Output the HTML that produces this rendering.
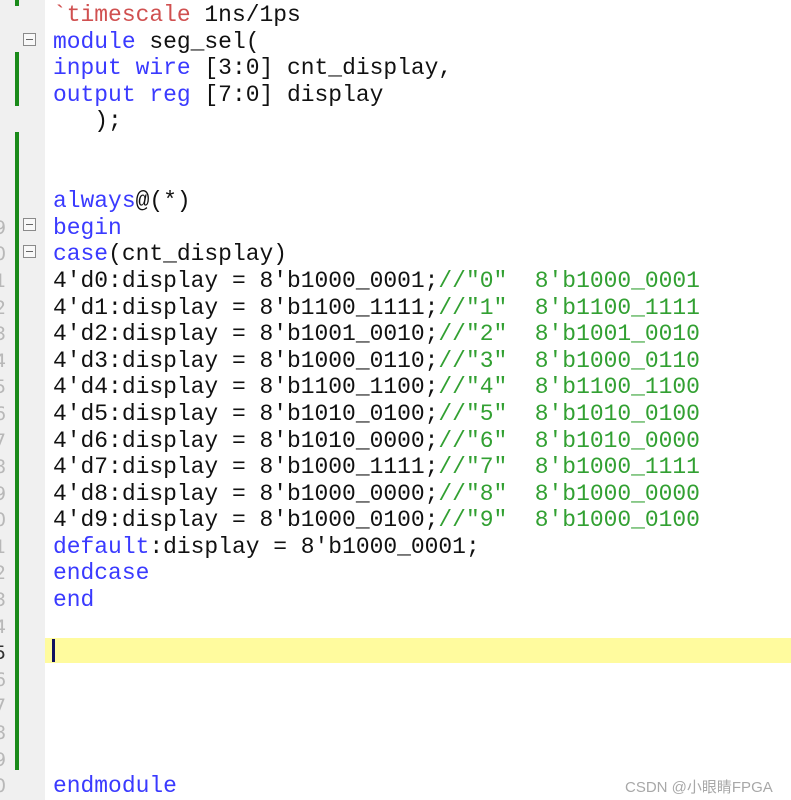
<!DOCTYPE html>
<html><head><meta charset="utf-8"><style>
html,body{margin:0;padding:0;background:#fff;width:791px;height:800px;overflow:hidden;position:relative}
.gut{position:absolute;left:0;top:0;width:45px;height:800px;background:#f0f0f0}
.bar{position:absolute;left:15px;width:4px;background:#1a8a1a}
.code{position:absolute;left:53px;top:2px;font-family:"Liberation Mono",monospace;font-size:22.95px;line-height:26.6px;white-space:pre;color:#111}
.ln{position:absolute;left:-6px;top:2px;font-family:"DejaVu Sans",sans-serif;font-size:19px;line-height:26.6px;color:#b8b8b8;white-space:pre}
.k{color:#3a3aff}.t{color:#d05050}.c{color:#32a032}
.fold{position:absolute;left:23px;width:11px;height:11px;border:1px solid #8a8a8a;background:#f8f8f8}
.fold:after{content:"";position:absolute;left:2px;right:2px;top:5px;height:1px;background:#666}
.hl{position:absolute;left:45px;right:0;top:638px;height:25px;background:#fffb9e}
.cur{position:absolute;left:52px;top:639px;width:3px;height:23px;background:#101060}
.wm{position:absolute;left:625px;top:776px;font-family:"Liberation Sans","Noto Sans CJK SC",sans-serif;font-size:15px;color:#a8a8a8}
</style></head><body>
<div class="gut"></div>
<div class="bar" style="top:0;height:6px"></div>
<div class="bar" style="top:52px;height:54px"></div>
<div class="bar" style="top:132px;height:638px"></div>
<div class="fold" style="top:33px"></div>
<div class="fold" style="top:218px"></div>
<div class="fold" style="top:245px"></div>
<div class="ln"> 
 
 
 
 
 
 
 
9
0
1
2
3
4
5
6
7
8
9
0
1
2
3
4
<span style="color:#333">5</span>
6
7
8
9
0</div>
<div class="hl"></div>
<div class="cur"></div>
<div class="code"><span class="t">`timescale</span> 1ns/1ps
<span class="k">module</span> seg_sel(
<span class="k">input</span> <span class="k">wire</span> [3:0] cnt_display,
<span class="k">output</span> <span class="k">reg</span> [7:0] display
   );


<span class="k">always</span>@(*)
<span class="k">begin</span>
<span class="k">case</span>(cnt_display)
4'd0:display = 8'b1000_0001;<span class="c">//"0"  8'b1000_0001</span>
4'd1:display = 8'b1100_1111;<span class="c">//"1"  8'b1100_1111</span>
4'd2:display = 8'b1001_0010;<span class="c">//"2"  8'b1001_0010</span>
4'd3:display = 8'b1000_0110;<span class="c">//"3"  8'b1000_0110</span>
4'd4:display = 8'b1100_1100;<span class="c">//"4"  8'b1100_1100</span>
4'd5:display = 8'b1010_0100;<span class="c">//"5"  8'b1010_0100</span>
4'd6:display = 8'b1010_0000;<span class="c">//"6"  8'b1010_0000</span>
4'd7:display = 8'b1000_1111;<span class="c">//"7"  8'b1000_1111</span>
4'd8:display = 8'b1000_0000;<span class="c">//"8"  8'b1000_0000</span>
4'd9:display = 8'b1000_0100;<span class="c">//"9"  8'b1000_0100</span>
<span class="k">default</span>:display = 8'b1000_0001;
<span class="k">endcase</span>
<span class="k">end</span>






<span class="k">endmodule</span></div>
<div class="wm">CSDN @小眼睛FPGA</div>
</body></html>
